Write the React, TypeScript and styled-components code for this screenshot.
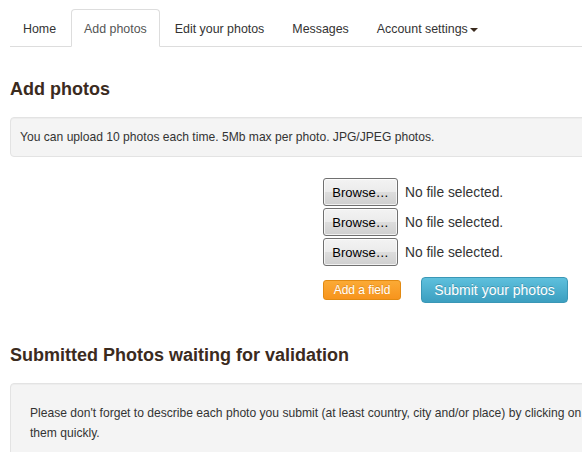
import React from "react";
import styled, { createGlobalStyle } from "styled-components";

const Global = createGlobalStyle`
  html, body { margin: 0; padding: 0; overflow: hidden; background: #fff; }
  body { font-family: "Liberation Sans", Arial, sans-serif; color: #333; font-size: 12px; }
  * { box-sizing: border-box; }
`;

const Page = styled.div`
  width: 860px;
  padding-left: 10px;
`;

const Tabs = styled.ul`
  display: flex;
  list-style: none;
  margin: 9px 0 0;
  padding: 0;
  border-bottom: 1px solid #ddd;
`;

const Tab = styled.li<{ $active?: boolean }>`
  margin: 0 2px -1px 0;
  padding: 9px 12px 7px;
  line-height: 20px;
  font-size: 12.4px;
  border: 1px solid ${(p) => (p.$active ? "#ddd" : "transparent")};
  border-bottom-color: ${(p) => (p.$active ? "#fff" : "transparent")};
  border-radius: 4px 4px 0 0;
  background: ${(p) => (p.$active ? "#fff" : "transparent")};
  color: ${(p) => (p.$active ? "#555" : "#333")};
  display: flex;
  align-items: center;
`;

const Caret = styled.span`
  display: inline-block;
  width: 0;
  height: 0;
  margin-left: 2px;
  margin-top: 1px;
  border-top: 4px solid #3b2b1e;
  border-left: 4px solid transparent;
  border-right: 4px solid transparent;
`;

const Heading = styled.h2<{ $top: number }>`
  margin: ${(p) => p.$top}px 0 17px;
  font-size: 18px;
  line-height: 22px;
  font-weight: bold;
  color: #3b2b1e;
`;

const Well = styled.div<{ $pad: string; $lh: number }>`
  background: #f4f4f4;
  border: 1px solid #e3e3e3;
  border-radius: 4px;
  padding: ${(p) => p.$pad};
  line-height: ${(p) => p.$lh}px;
  font-size: 12.1px;
  color: #333;
  box-shadow: inset 0 1px 1px rgba(0, 0, 0, 0.03);
`;

const Form = styled.div`
  margin-top: 21px;
  padding-left: 313px;
  display: flex;
  flex-direction: column;
  gap: 2px;
`;

const FileRow = styled.div`
  display: flex;
  align-items: center;
  height: 28px;
`;

const BrowseButton = styled.button`
  width: 75px;
  height: 28px;
  padding: 0;
  border: 1px solid #707070;
  border-radius: 3px;
  background: linear-gradient(#f3f3f3, #ebebeb 50%, #dddddd 51%, #cfcfcf);
  font-family: "Liberation Sans", Arial, sans-serif;
  font-size: 13px;
  color: #000;
  box-shadow: inset 0 0 0 1px rgba(255, 255, 255, 0.7);
`;

const FileLabel = styled.span`
  margin-left: 7px;
  font-size: 13.8px;
  color: #333;
`;

const Actions = styled.div`
  display: flex;
  align-items: center;
  gap: 20px;
  margin-top: 9px;
  height: 26px;
`;

const AddButton = styled.button`
  width: 78px;
  height: 20px;
  padding: 0;
  border: 1px solid #e28a12;
  border-radius: 3px;
  background: linear-gradient(#fbaa35, #f7941d);
  color: #fff;
  font-family: "Liberation Sans", Arial, sans-serif;
  font-size: 12px;
  text-shadow: 0 -1px 0 rgba(0, 0, 0, 0.15);
`;

const SubmitButton = styled.button`
  width: 147px;
  height: 26px;
  padding: 0;
  border: 1px solid #3a97b6;
  border-radius: 4px;
  background: linear-gradient(#5ec0dd, #3c9fc0);
  color: #fff;
  font-family: "Liberation Sans", Arial, sans-serif;
  font-size: 14px;
  text-shadow: 0 -1px 0 rgba(0, 0, 0, 0.2);
`;

export default function App() {
  return (
    <Page>
      <Global />
      <Tabs>
        <Tab>Home</Tab>
        <Tab $active>Add photos</Tab>
        <Tab>Edit your photos</Tab>
        <Tab>Messages</Tab>
        <Tab>
          Account settings
          <Caret />
        </Tab>
      </Tabs>

      <Heading $top={31}>Add photos</Heading>
      <Well $pad="10px 9px" $lh={18}>
        You can upload 10 photos each time. 5Mb max per photo. JPG/JPEG photos.
      </Well>

      <Form>
        {[0, 1, 2].map((i) => (
          <FileRow key={i}>
            <BrowseButton>Browse…</BrowseButton>
            <FileLabel>No file selected.</FileLabel>
          </FileRow>
        ))}
        <Actions>
          <AddButton>Add a field</AddButton>
          <SubmitButton>Submit your photos</SubmitButton>
        </Actions>
      </Form>

      <Heading $top={41}>Submitted Photos waiting for validation</Heading>
      <Well $pad="19px" $lh={20}>
        Please don't forget to describe each photo you submit (at least country, city and/or place) by clicking on
        "Edit your photos" so that we can validate
        <br />
        them quickly.
      </Well>
    </Page>
  );
}
